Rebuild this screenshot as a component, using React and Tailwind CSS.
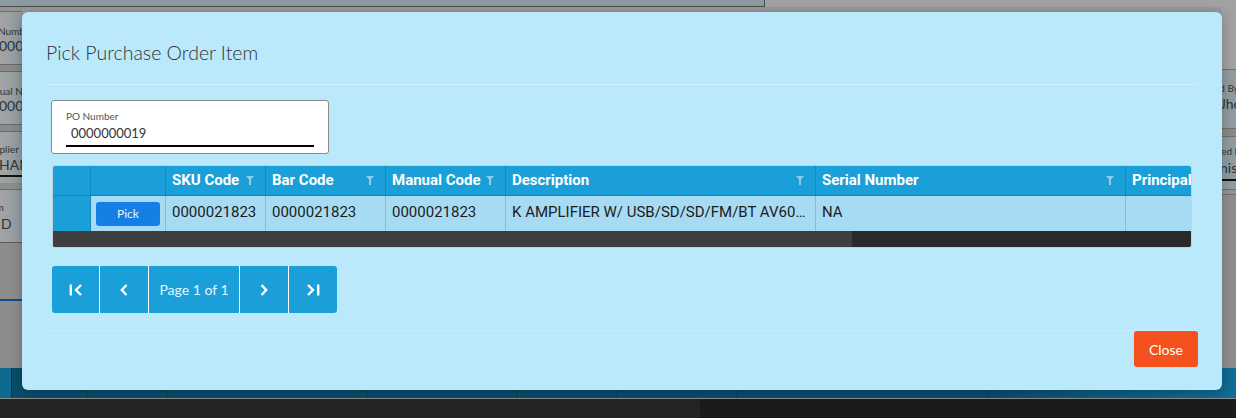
import React from 'react';

const FilterIcon = () => (
  <svg width="8" height="9" viewBox="0 0 8 9" className="shrink-0">
    <path d="M0 0H8L5 3.5V9H3V3.5Z" fill="#8ccbea" />
  </svg>
);

const FirstIcon = () => (
  <svg width="14" height="12" viewBox="0 0 14 12" fill="none" stroke="white" strokeWidth="2.4">
    <path d="M1.8 0.5V11.5" />
    <path d="M12 1L7 6L12 11" />
  </svg>
);

const PrevIcon = () => (
  <svg width="8" height="12" viewBox="0 0 8 12" fill="none" stroke="white" strokeWidth="2.4">
    <path d="M6.5 1L1.8 6L6.5 11" />
  </svg>
);

const NextIcon = () => (
  <svg width="8" height="12" viewBox="0 0 8 12" fill="none" stroke="white" strokeWidth="2.4">
    <path d="M1.5 1L6.2 6L1.5 11" />
  </svg>
);

const LastIcon = () => (
  <svg width="14" height="12" viewBox="0 0 14 12" fill="none" stroke="white" strokeWidth="2.4">
    <path d="M2 1L7 6L2 11" />
    <path d="M12.2 0.5V11.5" />
  </svg>
);

const headers = [
  { label: '', cls: 'w-[38px]', filter: false },
  { label: '', cls: 'w-[75px]', filter: false },
  { label: 'SKU Code', cls: 'w-[100px]', filter: true },
  { label: 'Bar Code', cls: 'w-[120px]', filter: true },
  { label: 'Manual Code', cls: 'w-[120px]', filter: true },
  { label: 'Description', cls: 'w-[310px]', filter: true },
  { label: 'Serial Number', cls: 'w-[310px]', filter: true },
  { label: 'Principal', cls: 'w-[160px]', filter: true },
];

const row = ['0000021823', '0000021823', '0000021823', 'K AMPLIFIER W/ USB/SD/SD/FM/BT AV6000 WITH MIC', 'NA', ''];

const App = () => {
  return (
    <div className="relative w-[1236px] h-[418px] overflow-hidden flex flex-col bg-[#959595] font-['Lato',sans-serif]">
      {/* dimmed page behind the dialog */}
      <div className="h-[7px] flex shrink-0">
        <div className="w-[765px] bg-[#8b9ba1] border-b border-r border-[#4a4a4a]" />
        <div className="flex-1 bg-[#a2a2a2]" />
      </div>

      <div className="flex-1 flex min-h-0">
        {/* left edge of the form */}
        <div className="w-[22px] flex flex-col overflow-hidden text-[#2f3336] whitespace-nowrap">
          <div className="h-[5px] bg-[#959595] border-b border-[#6e6e6e]" />
          <div className="h-[52px] bg-gradient-to-r from-[#a3a3a3] to-[#8e9ca2] pt-[13px]">
            <div className="text-[10px] leading-[12px] -ml-[2px]">Number</div>
            <div className="text-[14px] leading-[18px] -ml-[1px]">0000000019</div>
          </div>
          <div className="h-[8px] bg-[#8a8a8a] border-y border-[#686868]" />
          <div className="h-[52px] bg-gradient-to-r from-[#a3a3a3] to-[#8e9ca2] pt-[13px]">
            <div className="text-[10px] leading-[12px] -ml-[20px]">Manual No.</div>
            <div className="text-[14px] leading-[18px] -ml-[1px]">0000021823</div>
          </div>
          <div className="h-[8px] bg-[#8a8a8a] border-y border-[#686868]" />
          <div className="h-[51px] bg-gradient-to-r from-[#a3a3a3] to-[#8e9ca2] pt-[11px]">
            <div className="text-[10px] leading-[12px] -ml-[17px]">Supplier</div>
            <div className="text-[14px] leading-[20px] border-b-2 border-[#111] -ml-[1px]">HANWEI TRADING</div>
          </div>
          <div className="h-[7px] bg-[#8e8e8e] border-b border-[#6a6a6a]" />
          <div className="h-[53px] bg-gradient-to-r from-[#a3a3a3] to-[#8e9ca2] pt-[11px] border-b border-[#5c5c5c]">
            <div className="text-[10px] leading-[12px] -ml-[18px]">Term</div>
            <div className="text-[14px] leading-[22px] pl-[1px]">D</div>
          </div>
          <div className="flex-1 bg-[#8c8c8c]">
            <div className="mt-[56px] h-[2px] bg-[#0e4e8c]" />
          </div>
        </div>

        <div className="flex-1 bg-[#9a9a9a]" />

        {/* right edge of the form */}
        <div className="w-[14px] flex flex-col overflow-hidden text-[#2f3336] whitespace-nowrap">
          <div className="h-[63px] bg-[#a1a1a1] border-b border-[#6f6f6f]" />
          <div className="h-[59px] bg-[#8f9ba0] pt-[12px] border-b border-[#6f6f6f]">
            <div className="text-[10px] leading-[12px] -ml-[40px]">Approved By</div>
            <div className="text-[14px] leading-[20px] -ml-[2px]">Jhon</div>
          </div>
          <div className="h-[8px] bg-[#8a8a8a] border-b border-[#6f6f6f]" />
          <div className="h-[52px] bg-[#8f9ba0] pt-[8px]">
            <div className="text-[10px] leading-[12px] -ml-[28px]">Checked By</div>
            <div className="text-[14px] leading-[22px] border-b-2 border-[#111] -ml-[34px]">Administrator</div>
          </div>
          <div className="h-[6px] border-y border-[#6f6f6f] bg-[#939393]" />
          <div className="flex-1 bg-[#8e8e8e]" />
        </div>
      </div>

      <div className="h-[30px] flex shrink-0 bg-[#0b4d6b]">
        <div className="w-[12px] bg-[#0f6a92] border-r border-[#083a52]" />
        <div className="w-[75px] border-r border-[#083a52]" />
        <div className="w-[80px] border-r border-[#083a52]" />
        <div className="w-[200px] border-r border-[#083a52]" />
        <div className="w-[150px] border-r border-[#083a52]" />
        <div className="w-[101px] border-r border-[#083a52]" />
        <div className="w-[120px] border-r border-[#083a52]" />
        <div className="w-[250px] border-r border-[#083a52]" />
        <div className="flex-1 bg-gradient-to-r from-[#0b4d6b] to-[#106c96]" />
      </div>
      <div className="h-px bg-[#8d8d8d] shrink-0" />
      <div className="h-[19px] flex shrink-0">
        <div className="w-[700px] bg-[#242424]" />
        <div className="flex-1 bg-[#1b1b1b]" />
      </div>

      {/* dialog */}
      <div className="absolute left-[22px] top-[12px] w-[1200px] h-[378px] rounded-[6px] bg-[#bbe9fc] px-6 flex flex-col shadow-[0_2px_12px_rgba(0,0,0,0.25)]">
        <div className="pt-[27px] pb-[17px] border-b border-[#cdf1fd]">
          <h1 className="text-[19.5px] leading-[28px] font-light text-[#333]">Pick Purchase Order Item</h1>
        </div>

        <div className="pt-[15px]">
          {/* PO number field */}
          <div className="ml-[5px] w-[278px] h-[54px] bg-white border border-[#8a8a8a] rounded-[3px] px-[14px] pt-[9px]">
            <div className="text-[10px] leading-[12px] text-[#555]">PO Number</div>
            <div className="h-[25px] border-b-2 border-black pl-[5px] text-[13px] leading-[23px] text-[#333]">0000000019</div>
          </div>

          {/* grid */}
          <div className="mt-[11px] mx-[6px] border border-[#c3d3da] rounded-[3px] overflow-hidden font-['Roboto',sans-serif]">
            <div className="flex h-[30px] bg-[#1a9fd9] border-b border-[#1683b5] whitespace-nowrap">
              {headers.map((h, i) => (
                <div
                  key={i}
                  className={`${h.cls} shrink-0 h-full flex items-center justify-between pl-[6px] pr-[11px] border-r border-[#1786bb] text-white font-bold text-[15px]`}
                >
                  <span>{h.label}</span>
                  {h.filter && <FilterIcon />}
                </div>
              ))}
            </div>
            <div className="flex h-[35px] bg-[#a6dbf3] whitespace-nowrap">
              <div className="w-[38px] shrink-0 bg-[#1a9fd9] border-r border-[#1786bb]" />
              <div className="w-[75px] shrink-0 border-r border-[#80bfdc] pl-[5px] pt-[5px]">
                <button className="w-[64px] h-[24px] rounded-[3px] bg-[#1480e5] text-[12px] text-[#eef6fd] font-['Lato',sans-serif]">Pick</button>
              </div>
              {row.map((v, i) => (
                <div
                  key={i}
                  className={`${headers[i + 2].cls} shrink-0 border-r border-[#80bfdc] px-[6px] pt-[6px] text-[15px] leading-[20px] text-[#1c1c1c] overflow-hidden text-ellipsis`}
                >
                  {v}
                </div>
              ))}
            </div>
            <div className="h-[16px] bg-[#2a2a2a]">
              <div className="w-[799px] h-full bg-[#3f3f3f]" />
            </div>
          </div>

          {/* pager */}
          <div className="mt-[18px] ml-[6px] flex w-fit h-[47px] rounded-[3px] overflow-hidden bg-[#1a9fd9] divide-x divide-white">
            <button className="w-[48px] flex items-center justify-center"><FirstIcon /></button>
            <button className="w-[49px] flex items-center justify-center"><PrevIcon /></button>
            <div className="w-[91px] flex items-center justify-center text-[14px] text-[#e8f5fc]">Page 1 of 1</div>
            <button className="w-[49px] flex items-center justify-center"><NextIcon /></button>
            <button className="w-[48px] flex items-center justify-center"><LastIcon /></button>
          </div>
        </div>

        <div className="mt-[17px] border-t border-[#c6eefc] flex justify-end">
          <button className="w-[64px] h-[36px] rounded-[3px] bg-[#f4511e] text-white text-[14px]">Close</button>
        </div>
      </div>
    </div>
  );
};

export default App;
